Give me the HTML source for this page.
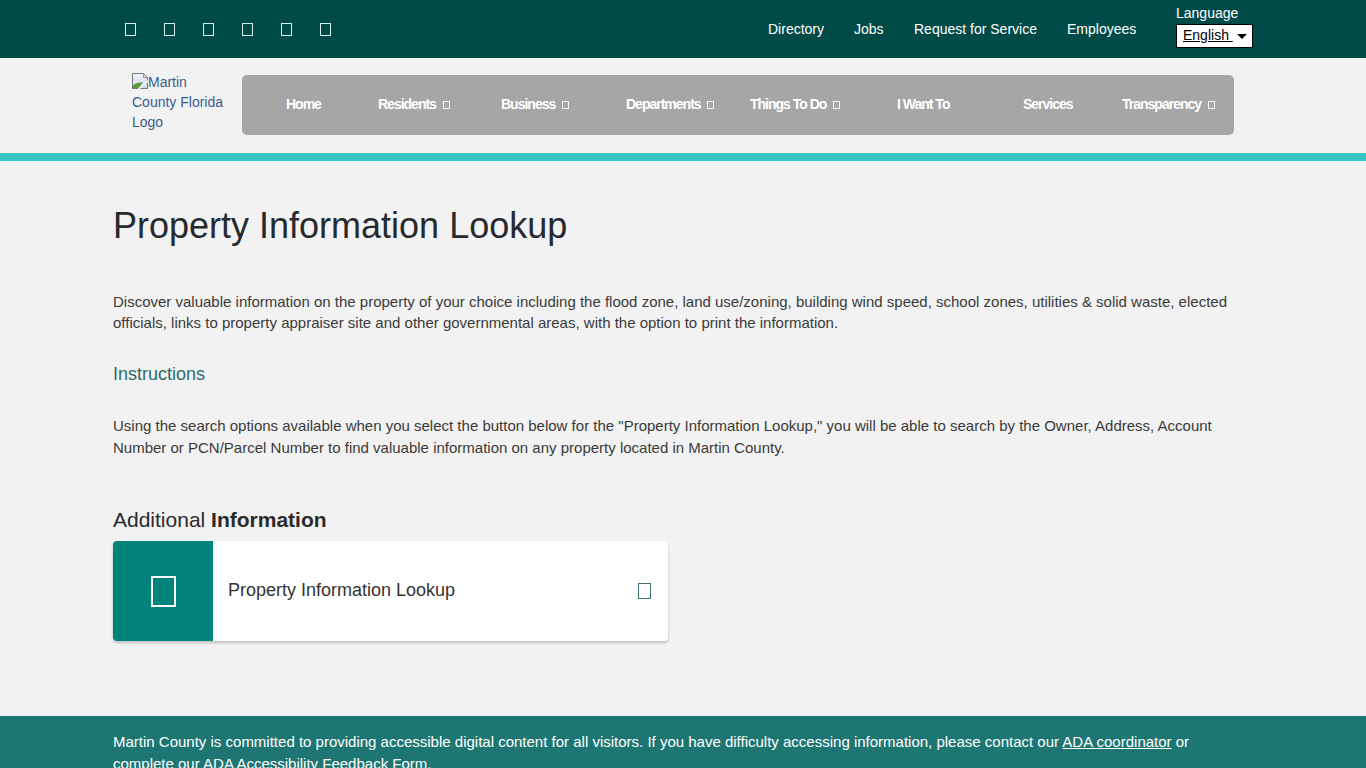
<!DOCTYPE html>
<html>
<head>
<meta charset="utf-8">
<style>
*{box-sizing:border-box;margin:0;padding:0}
html,body{width:1366px;height:768px;overflow:hidden;background:#f2f2f2;font-family:"Liberation Sans",sans-serif;color:#333}
.top{position:absolute;left:0;top:0;width:1366px;height:58px;background:#004b48}
.tofu{position:absolute;border:1px solid #d8f0ea;}
.social .tofu{top:23px;width:11px;height:13px}
.toplinks a{position:absolute;top:21px;color:#fff;font-size:14px;text-decoration:none;white-space:nowrap}
.lang{position:absolute;left:1176px;top:5px;color:#fff;font-size:14px}
.sel{position:absolute;left:1176px;top:24px;width:77px;height:24px;background:#fff;border:1px solid #000}
.sel span{position:absolute;left:6px;top:2px;font-size:14px;color:#000;text-decoration:underline}
.sel i{position:absolute;left:60px;top:9px;width:0;height:0;border-left:5px solid transparent;border-right:5px solid transparent;border-top:5px solid #000}
.logo{position:absolute;left:132px;top:72px;width:100px;font-size:14px;line-height:20px;color:#3a5b8e}
.logo svg{vertical-align:-2px}
.nav{position:absolute;left:242px;top:75px;width:992px;height:60px;background:#a6a6a6;border-radius:5px}
.nav a{position:absolute;top:21px;color:#fff;font-size:14px;font-weight:bold;letter-spacing:-1px;white-space:nowrap;text-decoration:none}
.nav .tofu{width:7px;height:8px;top:26px;border-color:#f4f4f4}
.stripe{position:absolute;left:0;top:153px;width:1366px;height:8px;background:#36c6c6}
h1{position:absolute;left:113px;top:205px;font-size:36px;font-weight:normal;color:#262a2f;white-space:nowrap}
p.t{position:absolute;left:113px;width:1130px;font-size:15px;line-height:21px;color:#3a3a3a}
h3{position:absolute;left:113px;top:364px;font-size:18px;font-weight:normal;color:#2d6a6c}
h2{position:absolute;left:113px;top:508px;font-size:21px;font-weight:normal;color:#2a2a2a}
.card{position:absolute;left:113px;top:541px;width:555px;height:100px;background:#fff;border-radius:4px;box-shadow:0 2px 3px rgba(0,0,0,.2)}
.card .ic{position:absolute;left:0;top:0;width:100px;height:100px;background:#00837b;border-radius:4px 0 0 4px}
.card .ic .tofu{left:38px;top:35px;width:25px;height:31px;border:2px solid #fff}
.card .lbl{position:absolute;left:115px;top:39px;font-size:18px;color:#333}
.card .arr{position:absolute;left:525px;top:42px;width:13px;height:16px;border:1px solid #3f7472}
.foot{position:absolute;left:0;top:716px;width:1366px;height:52px;background:#1e7673;color:#fff;font-size:15px}
.foot p{position:absolute;left:113px;top:14.5px;width:1130px;line-height:22px}
.foot a{color:#fff;text-decoration:underline}
</style>
</head>
<body>
<div class="top">
  <div class="social">
    <div class="tofu" style="left:125px"></div>
    <div class="tofu" style="left:164px"></div>
    <div class="tofu" style="left:203px"></div>
    <div class="tofu" style="left:242px"></div>
    <div class="tofu" style="left:281px"></div>
    <div class="tofu" style="left:320px"></div>
  </div>
  <div class="toplinks">
    <a style="left:768px">Directory</a>
    <a style="left:854px">Jobs</a>
    <a style="left:914px">Request for Service</a>
    <a style="left:1067px">Employees</a>
  </div>
  <div class="lang">Language</div>
  <div class="sel"><span>English&nbsp;</span><i></i></div>
</div>
<div class="logo"><svg width="16" height="16" viewBox="0 0 16 16"><defs><linearGradient id="g" x1="0" y1="0" x2="0" y2="1"><stop offset="0" stop-color="#f0f3f8"/><stop offset="1" stop-color="#c9d6ee"/></linearGradient></defs><path d="M0.5 0.5H11.5L15.5 4.5V15.5H0.5Z" fill="url(#g)" stroke="#777" stroke-width="1"/><path d="M11.5 0.5V4.5H15.5" fill="none" stroke="#999" stroke-width="1"/><path d="M1 15V12.5Q4 9 11 9.5L6.5 15Z" fill="#58993a"/><path d="M6 16.5L16.5 7.5" stroke="#f4f8f0" stroke-width="1.6"/></svg>Martin County Florida Logo</div>
<div class="nav">
  <a style="left:44px">Home</a>
  <a style="left:136px">Residents</a><div class="tofu" style="left:201px"></div>
  <a style="left:259px">Business</a><div class="tofu" style="left:320px"></div>
  <a style="left:384px">Departments</a><div class="tofu" style="left:465px"></div>
  <a style="left:508px">Things To Do</a><div class="tofu" style="left:591px"></div>
  <a style="left:655px">I Want To</a>
  <a style="left:781px">Services</a>
  <a style="left:880px">Transparency</a><div class="tofu" style="left:966px"></div>
</div>
<div class="stripe"></div>
<h1>Property Information Lookup</h1>
<p class="t" style="top:291px">Discover valuable information on the property of your choice including the flood zone, land use/zoning, building wind speed, school zones, utilities &amp; solid waste, elected officials, links to property appraiser site and other governmental areas, with the option to print the information.</p>
<h3>Instructions</h3>
<p class="t" style="top:414.5px;line-height:22px">Using the search options available when you select the button below for the "Property Information Lookup," you will be able to search by the Owner, Address, Account Number or PCN/Parcel Number to find valuable information on any property located in Martin County.</p>
<h2>Additional <b>Information</b></h2>
<div class="card">
  <div class="ic"><div class="tofu"></div></div>
  <div class="lbl">Property Information Lookup</div>
  <div class="arr"></div>
</div>
<div class="foot"><p>Martin County is committed to providing accessible digital content for all visitors. If you have difficulty accessing information, please contact our <a>ADA coordinator</a> or complete our ADA Accessibility Feedback Form.</p></div>
</body>
</html>
